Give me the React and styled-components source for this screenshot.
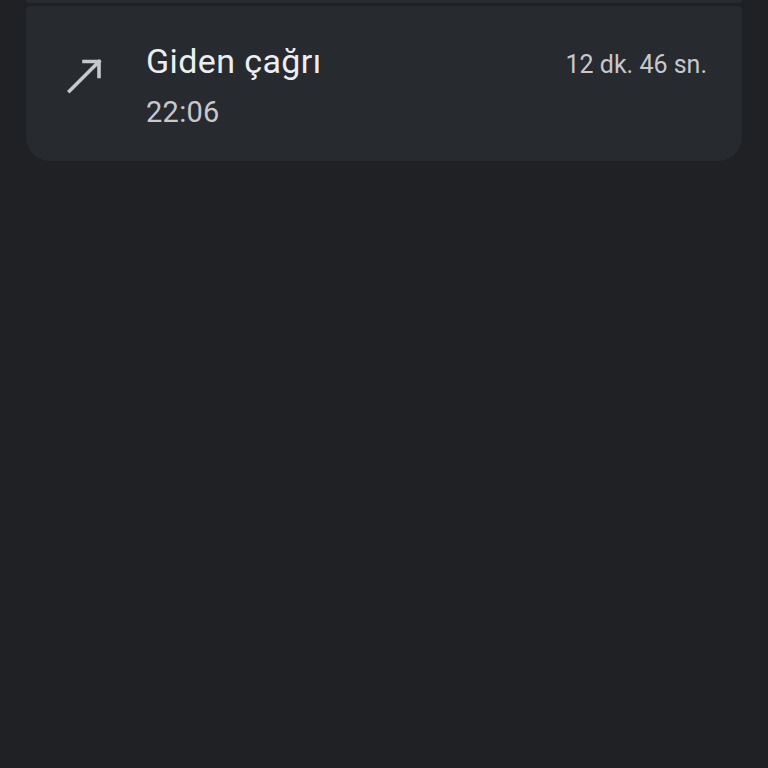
import React from "react";
import styled, { createGlobalStyle } from "styled-components";

const GlobalStyle = createGlobalStyle`
  html, body {
    margin: 0;
    padding: 0;
    background: #1f2125;
  }
  body {
    font-family: Roboto, "Noto Sans", "Liberation Sans", sans-serif;
    -webkit-font-smoothing: antialiased;
  }
`;

const Page = styled.div`
  width: 768px;
  height: 768px;
  background: #1f2125;
  overflow: hidden;
`;

const List = styled.div`
  display: flex;
  flex-direction: column;
  gap: 3px;
  padding: 0 26px;
`;

const PrevCard = styled.div`
  height: 3px;
  background: #272a2f;
  border-radius: 0 0 4px 4px;
`;

const Card = styled.div`
  display: flex;
  align-items: flex-start;
  background: #272a2f;
  border-radius: 4px 4px 24px 24px;
  padding: 35px 35px 31px 38px;
`;

const IconBox = styled.div`
  flex: 0 0 40px;
  width: 40px;
  height: 40px;
  margin-top: 15px;
  margin-right: 42px;
  display: flex;
  align-items: center;
  justify-content: center;
`;

const Body = styled.div`
  flex: 1;
  display: flex;
  flex-direction: column;
  gap: 9px;
`;

const HeaderRow = styled.div`
  display: flex;
  align-items: baseline;
  justify-content: space-between;
`;

const Title = styled.div`
  font-size: 34px;
  line-height: 40px;
  letter-spacing: 0.4px;
  color: #eceef1;
  font-weight: 400;
`;

const Duration = styled.div`
  font-size: 25px;
  line-height: 40px;
  color: #c6c8cc;
`;

const Time = styled.div`
  font-size: 29px;
  line-height: 36px;
  letter-spacing: 0.3px;
  color: #c6c8cc;
`;

const OutgoingIcon = () => (
  <svg width="40" height="40" viewBox="0 0 40 40" fill="none">
    <path d="M5.5 35 L35 5.5" stroke="#c6c8cc" strokeWidth="3.6" strokeLinecap="square" />
    <path d="M20 5.5 H35 V20.5" stroke="#c6c8cc" strokeWidth="3.6" strokeLinecap="square" />
  </svg>
);

export default function App() {
  return (
    <Page>
      <GlobalStyle />
      <List>
        <PrevCard />
        <Card>
          <IconBox>
            <OutgoingIcon />
          </IconBox>
          <Body>
            <HeaderRow>
              <Title>Giden çağrı</Title>
              <Duration>12 dk. 46 sn.</Duration>
            </HeaderRow>
            <Time>22:06</Time>
          </Body>
        </Card>
      </List>
    </Page>
  );
}
